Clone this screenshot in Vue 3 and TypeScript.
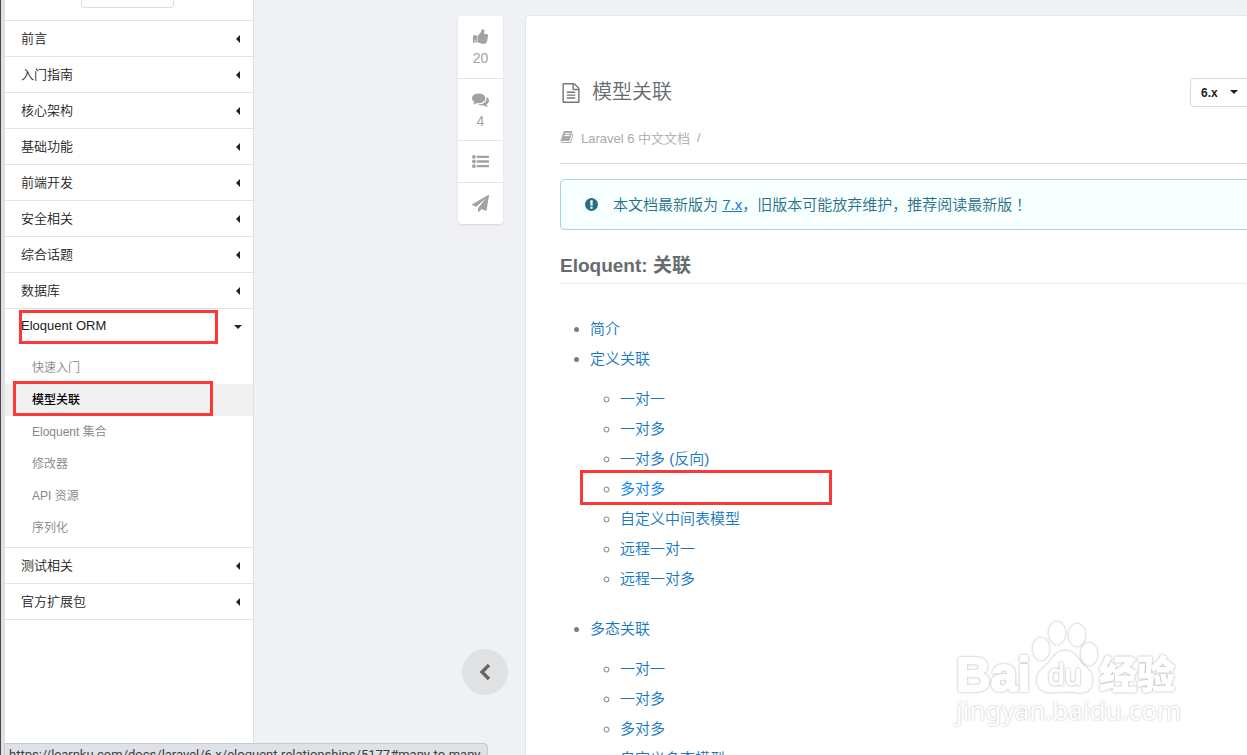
<script setup lang="ts">
import { ref } from 'vue'

interface Chapter {
  title: string
  children?: string[]
}
interface TocEntry {
  title: string
  children?: string[]
}

const chapters: Chapter[] = [
  { title: '前言' },
  { title: '入门指南' },
  { title: '核心架构' },
  { title: '基础功能' },
  { title: '前端开发' },
  { title: '安全相关' },
  { title: '综合话题' },
  { title: '数据库' },
  { title: 'Eloquent ORM', children: ['快速入门', '模型关联', 'Eloquent 集合', '修改器', 'API 资源', '序列化'] },
  { title: '测试相关' },
  { title: '官方扩展包' },
]

const toc: TocEntry[] = [
  { title: '简介' },
  {
    title: '定义关联',
    children: ['一对一', '一对多', '一对多 (反向)', '多对多', '自定义中间表模型', '远程一对一', '远程一对多'],
  },
  { title: '多态关联', children: ['一对一', '一对多', '多对多', '自定义多态模型'] },
]

const activePage = '模型关联'
const version = ref('6.x')

const icons = {
  thumb:
    'M384 1344q0-26-19-45t-45-19-45 19-19 45 19 45 45 19 45-19 19-45zm128-512v640q0 26-19 45t-45 19h-288q-26 0-45-19t-19-45v-640q0-26 19-45t45-19h288q26 0 45 19t19 45zm1184 0q0 86-55 149 15 44 15 76 3 76-43 137 17 56 0 117-15 57-54 94 9 112-49 181-64 76-197 78h-129q-66 0-144-15.5t-121.5-29-120.5-39.5q-123-43-158-44-26-1-45-19.5t-19-44.5v-641q0-25 18-43.5t43-20.5q24-2 76-59t101-121q68-87 101-120 18-18 31-48t17.5-48.5 13.5-60.5q7-39 12.5-61t19.5-52 34-50q19-19 45-19 46 0 82.5 10.5t60 26 40 40.5 24 45 12 50 5 45 .5 39q0 38-9.5 76t-19 60-27.5 56q-3 6-10 18t-11 22-8 24h277q78 0 135 57t57 135z',
  comments:
    'M1408 768q0 139-94 257t-256.5 186.5-353.5 68.5q-86 0-176-16-124 88-278 128-36 9-86 16h-3q-11 0-20.5-8t-11.5-21q-1-3-1-6.5t.5-6.5 2-6l2.5-5 3.5-5.5 4-5 4.5-5 4-4.5q5-6 23-25t26-29.5 22.5-29 25-38.5 20.5-44q-124-72-195-177t-71-224q0-139 94-257t256.5-186.5 353.5-68.5 353.5 68.5 256.5 186.5 94 257zm384 256q0 120-71 224.5t-195 176.5q10 24 20.5 44t25 38.5 22.5 29 26 29.5 23 25q1 1 4 4.5t4.5 5 4 5 3.5 5.5l2.5 5 2 6 .5 6.5-1 6.5q-3 14-13 22t-22 7q-50-7-86-16-154-40-278-128-90 16-176 16-271 0-472-132 58 4 88 4 161 0 309-45t264-129q125-92 192-212t67-254q0-77-23-152 129 71 204 178t75 230z',
  plane:
    'M1764 11q33 24 27 64l-256 1536q-5 29-32 45-14 8-31 8-11 0-24-5l-453-185-242 295q-18 23-49 23-13 0-22-4-19-7-30.5-23.5t-11.5-36.5v-349l864-1059-1069 925-395-162q-37-14-40-55-2-40 32-59l1664-960q15-9 32-9 20 0 36 11z',
  warning:
    'M896 128q209 0 385.5 103t279.5 279.5 103 385.5-103 385.5-279.5 279.5-385.5 103-385.5-103-279.5-279.5-103-385.5 103-385.5 279.5-279.5 385.5-103zm128 1247v-190q0-14-9-23.5t-22-9.5h-192q-13 0-23 10t-10 23v190q0 13 10 23t23 10h192q13 0 22-9.5t9-23.5zm-2-344l18-621q0-12-10-18-10-8-24-8h-220q-14 0-24 8-10 6-10 18l17 621q0 10 10 17.5t24 7.5h185q14 0 23.5-7.5t10.5-17.5z',
  file:
    'M1596 380q28 28 48 76t20 88v1152q0 40-28 68t-68 28h-1344q-40 0-68-28t-28-68v-1600q0-40 28-68t68-28h896q40 0 88 20t76 48zm-444-244v376h376q-10-29-22-41l-313-313q-12-12-41-22zm384 1528v-1024h-416q-40 0-68-28t-28-68v-416h-768v1536h1280zm-1024-864q0-14 9-23t23-9h704q14 0 23 9t9 23v64q0 14-9 23t-23 9h-704q-14 0-23-9t-9-23v-64zm736 224q14 0 23 9t9 23v64q0 14-9 23t-23 9h-704q-14 0-23-9t-9-23v-64q0-14 9-23t23-9h704zm0 256q14 0 23 9t9 23v64q0 14-9 23t-23 9h-704q-14 0-23-9t-9-23v-64q0-14 9-23t23-9h704z',
  book:
    'M1703 478q40 57 18 129l-275 906q-19 64-76.5 107.5t-122.5 43.5h-923q-77 0-148.5-53.5t-99.5-131.5q-24-67-2-127 0-4 3-27t4-37q1-8-3-21.5t-3-19.5q2-11 8-21t16.5-23.5 16.5-23.5q23-38 45-91.5t30-91.5q3-10 .5-30t-.5-28q3-11 17-28t17-23q21-36 42-92t25-90q1-9-2.5-32t.5-28q4-13 22-30.5t22-22.5q19-26 42.5-84.5t27.5-96.5q1-8-3-25.5t-2-26.5q2-8 9-18t18-23 17-21q8-12 16.5-30.5t15-35 16-36 19.5-32 26.5-23.5 36-11.5 47.5 5.5l-1 3q38-9 51-9h761q74 0 114 56t18 130l-274 906q-36 119-71.5 153.5t-128.5 34.5h-869q-27 0-38 15-11 16-1 43 24 70 144 70h923q29 0 56-15.5t35-41.5l300-987q7-22 5-57 38 15 59 43zm-1064 2q-4 13 2 22.5t20 9.5h608q13 0 25.5-9.5t16.5-22.5l21-64q4-13-2-22.5t-20-9.5h-608q-13 0-25.5 9.5t-16.5 22.5zm-83 256q-4 13 2 22.5t20 9.5h608q13 0 25.5-9.5t16.5-22.5l21-64q4-13-2-22.5t-20-9.5h-608q-13 0-25.5 9.5t-16.5 22.5z',
}
</script>

<template>
  <div class="page">
    <aside class="sidebar">
      <div class="sidebar-top">
        <button class="stub" type="button" aria-label="文档操作"></button>
      </div>
      <nav aria-label="文档目录">
        <section v-for="chapter in chapters" :key="chapter.title" class="chapter">
          <button class="chapter-head" type="button" :aria-expanded="!!chapter.children">
            <span>{{ chapter.title }}</span>
            <svg v-if="chapter.children" class="caret" viewBox="0 0 10 10" aria-hidden="true"><path d="M1 3h8L5 7z" /></svg>
            <svg v-else class="caret" viewBox="0 0 10 10" aria-hidden="true"><path d="M7 1v8L3 5z" /></svg>
          </button>
          <ul v-if="chapter.children" class="pages">
            <li v-for="page in chapter.children" :key="page">
              <a href="#" :class="{ active: page === activePage }">{{ page }}</a>
            </li>
          </ul>
        </section>
      </nav>
    </aside>

    <main class="workspace">
      <div class="rail">
        <button class="tall" type="button" aria-label="点赞 20">
          <svg class="icon" viewBox="0 0 1792 1792" aria-hidden="true"><path :d="icons.thumb" /></svg>
          <span>20</span>
        </button>
        <button class="tall" type="button" aria-label="评论 4">
          <svg class="icon" viewBox="0 0 1792 1792" aria-hidden="true"><path :d="icons.comments" /></svg>
          <span>4</span>
        </button>
        <button type="button" aria-label="目录">
          <svg class="icon" viewBox="0 0 18 18" aria-hidden="true">
            <circle cx="2" cy="4" r="2" /><circle cx="2" cy="9" r="2" /><circle cx="2" cy="14" r="2" />
            <path d="M5 2.8h13v2.4H5zM5 7.8h13v2.4H5zM5 12.8h13v2.4H5z" />
          </svg>
        </button>
        <button type="button" aria-label="分享">
          <svg class="icon" viewBox="0 0 1792 1792" aria-hidden="true"><path :d="icons.plane" /></svg>
        </button>
      </div>

      <article class="card">
        <header class="title-row">
          <h1>
            <svg class="file-icon" viewBox="0 0 1792 1792" aria-hidden="true"><path :d="icons.file" /></svg>
            <span>模型关联</span>
          </h1>
          <div class="version">
            <select v-model="version" aria-label="文档版本">
              <option>7.x</option>
              <option>6.x</option>
            </select>
            <svg class="caret version-caret" viewBox="0 0 10 10" aria-hidden="true"><path d="M1 3h8L5 7z" /></svg>
          </div>
        </header>
        <div class="crumbs">
          <svg class="book-icon" viewBox="0 0 1792 1792" aria-hidden="true"><path :d="icons.book" /></svg>
          <a href="#">Laravel 6 中文文档</a>
          <span class="slash">/</span>
        </div>
        <div class="notice">
          <svg class="notice-icon" viewBox="0 0 1792 1792" aria-hidden="true"><path :d="icons.warning" /></svg>
          <p>本文档最新版为 <a href="#">7.x</a>，旧版本可能放弃维护，推荐阅读最新版<span class="exclaim">！</span></p>
        </div>
        <h2>Eloquent: 关联</h2>
        <ul class="toc">
          <li v-for="entry in toc" :key="entry.title">
            <a href="#">{{ entry.title }}</a>
            <ul v-if="entry.children">
              <li v-for="child in entry.children" :key="child">
                <a href="#" :class="{ hovered: child === '多对多' && entry.title === '定义关联' }">{{ child }}</a>
              </li>
            </ul>
          </li>
        </ul>
      </article>
    </main>

    <button class="collapse" type="button" aria-label="收起目录">
      <svg viewBox="0 0 20 20" aria-hidden="true"><path d="M14 3L7 10l7 7" /></svg>
    </button>

    <div class="mark mark-chapter"></div>
    <div class="mark mark-page"></div>
    <div class="mark mark-link"></div>

    <svg class="watermark" viewBox="0 0 250 120" role="img" aria-label="Baidu经验 jingyan.baidu.com">
      <g class="wm-paw">
        <ellipse cx="91" cy="39" rx="8" ry="11" />
        <ellipse cx="107" cy="23" rx="8" ry="11" />
        <ellipse cx="127" cy="25" rx="8" ry="11" />
        <ellipse cx="139" cy="44" rx="8" ry="11" />
        <path d="M115 41c9 0 13 8 18 14 6 6 10 9 9 17-1 9-8 11-15 10-9-1-15-1-24 0-8 1-15-3-16-11 0-8 5-11 10-16 6-6 9-14 18-14z" />
      </g>
      <text class="wm-bold" x="6" y="81">Bai</text>
      <text class="wm-du" x="98" y="75">du</text>
      <text class="wm-cjk" x="149" y="78">经验</text>
      <text class="wm-url" x="6" y="110">jingyan.baidu.com</text>
    </svg>

    <div class="status">https://learnku.com/docs/laravel/6.x/eloquent-relationships/5177#many-to-many</div>
  </div>
</template>

<style>
body {
  margin: 0;
  overflow: hidden;
}
</style>

<style scoped>
.page {
  position: relative;
  display: flex;
  height: 100vh;
  overflow: hidden;
  box-sizing: border-box;
  border-left: 1px solid #4b4547;
  background: #f0f1f5;
  color: #666;
  font-family: 'Liberation Sans', 'Noto Sans CJK SC', sans-serif;
  font-weight: 350;
}
button,
select {
  font: inherit;
  color: inherit;
}
a {
  text-decoration: none;
}
svg {
  display: block;
  fill: currentColor;
}

.sidebar {
  flex: none;
  box-sizing: border-box;
  width: 253px;
  border-left: 4px solid #e0dfe3;
  border-right: 1px solid #dedede;
  background: #fff;
}
.sidebar-top {
  height: 20px;
  border-bottom: 1px solid #e4e4e5;
}
.stub {
  display: block;
  width: 93px;
  height: 8px;
  margin-left: 76px;
  padding: 0;
  border: 1px solid #dcdcdd;
  border-top: 0;
  border-radius: 0 0 4px 4px;
  background: #fff;
}
.chapter {
  border-bottom: 1px solid #e4e4e5;
}
.chapter-head {
  display: flex;
  align-items: center;
  justify-content: space-between;
  width: 100%;
  height: 35px;
  padding: 0 10px 2px 16px;
  border: 0;
  background: none;
  color: #222;
  font-size: 13px;
}
.caret {
  width: 10px;
  height: 10px;
}
.chapter-head .caret {
  margin-top: 3px;
}
.pages {
  margin: 0;
  padding: 8px 0 3px;
  list-style: none;
}
.pages a {
  display: block;
  padding-left: 27px;
  color: #868686;
  font-size: 12px;
  line-height: 32px;
}
.pages a.active {
  background: #f0f0f0;
  color: #000;
  font-weight: 500;
}

.workspace {
  flex: 1;
  min-width: 0;
  display: flex;
  align-items: flex-start;
  gap: 22px;
  padding: 15px 0 0 204px;
}
.rail {
  flex: none;
  width: 45px;
  margin-top: 1px;
  overflow: hidden;
  border-radius: 4px;
  background: #fff;
  box-shadow: 0 1px 2px #d4d4d8;
}
.rail button {
  display: flex;
  flex-direction: column;
  align-items: center;
  justify-content: center;
  gap: 3px;
  box-sizing: border-box;
  width: 100%;
  height: 42px;
  padding: 0;
  border: 0;
  background: none;
  color: #a2a2a2;
  font-size: 14px;
  line-height: 20px;
}
.rail button.tall {
  height: 62px;
  padding-top: 2px;
}
.rail button + button {
  border-top: 1px solid #e4e4e5;
}
.icon {
  width: 17px;
  height: 17px;
}
.card {
  flex: 1;
  min-width: 0;
  height: 820px;
  margin-right: -40px;
  padding: 62px 34px 0;
  border: 1px solid #e2e6ee;
  border-radius: 4px;
  background: #fff;
}
.title-row {
  display: flex;
  align-items: center;
  justify-content: space-between;
}
h1 {
  display: flex;
  align-items: center;
  gap: 10px;
  margin: 0;
  color: #666b6e;
  font-size: 20px;
  font-weight: 350;
  line-height: 29px;
}
.file-icon {
  width: 22px;
  height: 20px;
  color: #777;
}
.version {
  position: relative;
  color: #222;
}
.version select {
  display: block;
  width: 62px;
  height: 29px;
  padding: 0 10px;
  border: 1px solid #d9dadb;
  border-radius: 4px;
  background: #fff;
  appearance: none;
  font-size: 12px;
  font-weight: 700;
}
.version-caret {
  position: absolute;
  top: 9px;
  right: 13px;
  pointer-events: none;
}
.crumbs {
  display: flex;
  align-items: center;
  height: 52px;
  padding-top: 4px;
  border-bottom: 1px solid #d4dbe0;
  color: #aaa;
  font-size: 13px;
}
.crumbs a {
  margin: 0 7px;
  color: inherit;
}
.book-icon {
  width: 14px;
  height: 14px;
}
.notice {
  display: flex;
  align-items: center;
  margin-top: 15px;
  padding: 10px 23px;
  border: 1px solid #a9d5de;
  border-radius: 4px;
  background: #f8ffff;
  color: #276f86;
  font-size: 15px;
  line-height: 28px;
}
.notice-icon {
  width: 15px;
  height: 15px;
  margin-right: 14px;
}
.notice p {
  margin: 0;
}
.notice a {
  color: #1678c2;
  text-decoration: underline;
}
.exclaim {
  font-family: 'Noto Sans CJK TC', sans-serif;
}
h2 {
  margin: 21px 0 30px;
  padding-bottom: 2px;
  border-bottom: 1px solid #eaeaea;
  color: #666b6e;
  font-size: 19px;
  font-weight: 700;
  line-height: 30px;
}
.toc,
.toc ul {
  margin: 0;
  padding-left: 30px;
  color: #777f82;
  font-size: 15px;
  line-height: 30px;
}
.toc ul {
  margin: 10px 0 20px;
  list-style: circle;
}
.toc a {
  color: #1678c2;
}
.toc a.hovered {
  color: #0a84f0;
}

.collapse {
  position: absolute;
  left: 461px;
  bottom: 60px;
  display: flex;
  align-items: center;
  justify-content: center;
  width: 46px;
  height: 46px;
  padding: 0;
  border: 0;
  border-radius: 50%;
  background: #e0e1e2;
  color: #666;
}
.collapse svg {
  width: 20px;
  height: 20px;
  fill: none;
  stroke: currentColor;
  stroke-width: 3.4;
}
.mark {
  position: absolute;
  box-sizing: border-box;
  border: 3px solid #fb3838;
  pointer-events: none;
}
.mark-chapter {
  left: 18px;
  top: 310px;
  width: 199px;
  height: 34px;
}
.mark-page {
  left: 12px;
  top: 381px;
  width: 200px;
  height: 35px;
}
.mark-link {
  left: 579px;
  top: 470px;
  width: 252px;
  height: 35px;
}
.watermark {
  position: absolute;
  right: 47px;
  bottom: 25px;
  width: 250px;
  height: 120px;
  pointer-events: none;
  fill: #fff;
  stroke: #fff;
  stroke-width: 1;
}
.watermark text,
.wm-paw {
  filter: drop-shadow(0 0 1px #aaa);
}
.wm-bold {
  font-size: 48px;
  font-weight: 700;
  stroke-width: 2;
}
.wm-du {
  font-size: 30px;
}
.wm-cjk {
  font-size: 38px;
  font-weight: 900;
}
.watermark .wm-url {
  font-family: 'Noto Sans', sans-serif;
  font-size: 26px;
  font-weight: 400;
  stroke: none;
  filter: drop-shadow(0 0 1px #bbb);
}
.status {
  position: absolute;
  left: 3px;
  bottom: -10px;
  padding: 2px 6px 0 4px;
  border: 1px solid #c8cacc;
  border-radius: 0 4px 0 0;
  background: #dee1e6;
  color: #3c4043;
  font-family: Roboto, sans-serif;
  font-size: 13px;
  font-weight: 400;
  line-height: 18px;
}
</style>
